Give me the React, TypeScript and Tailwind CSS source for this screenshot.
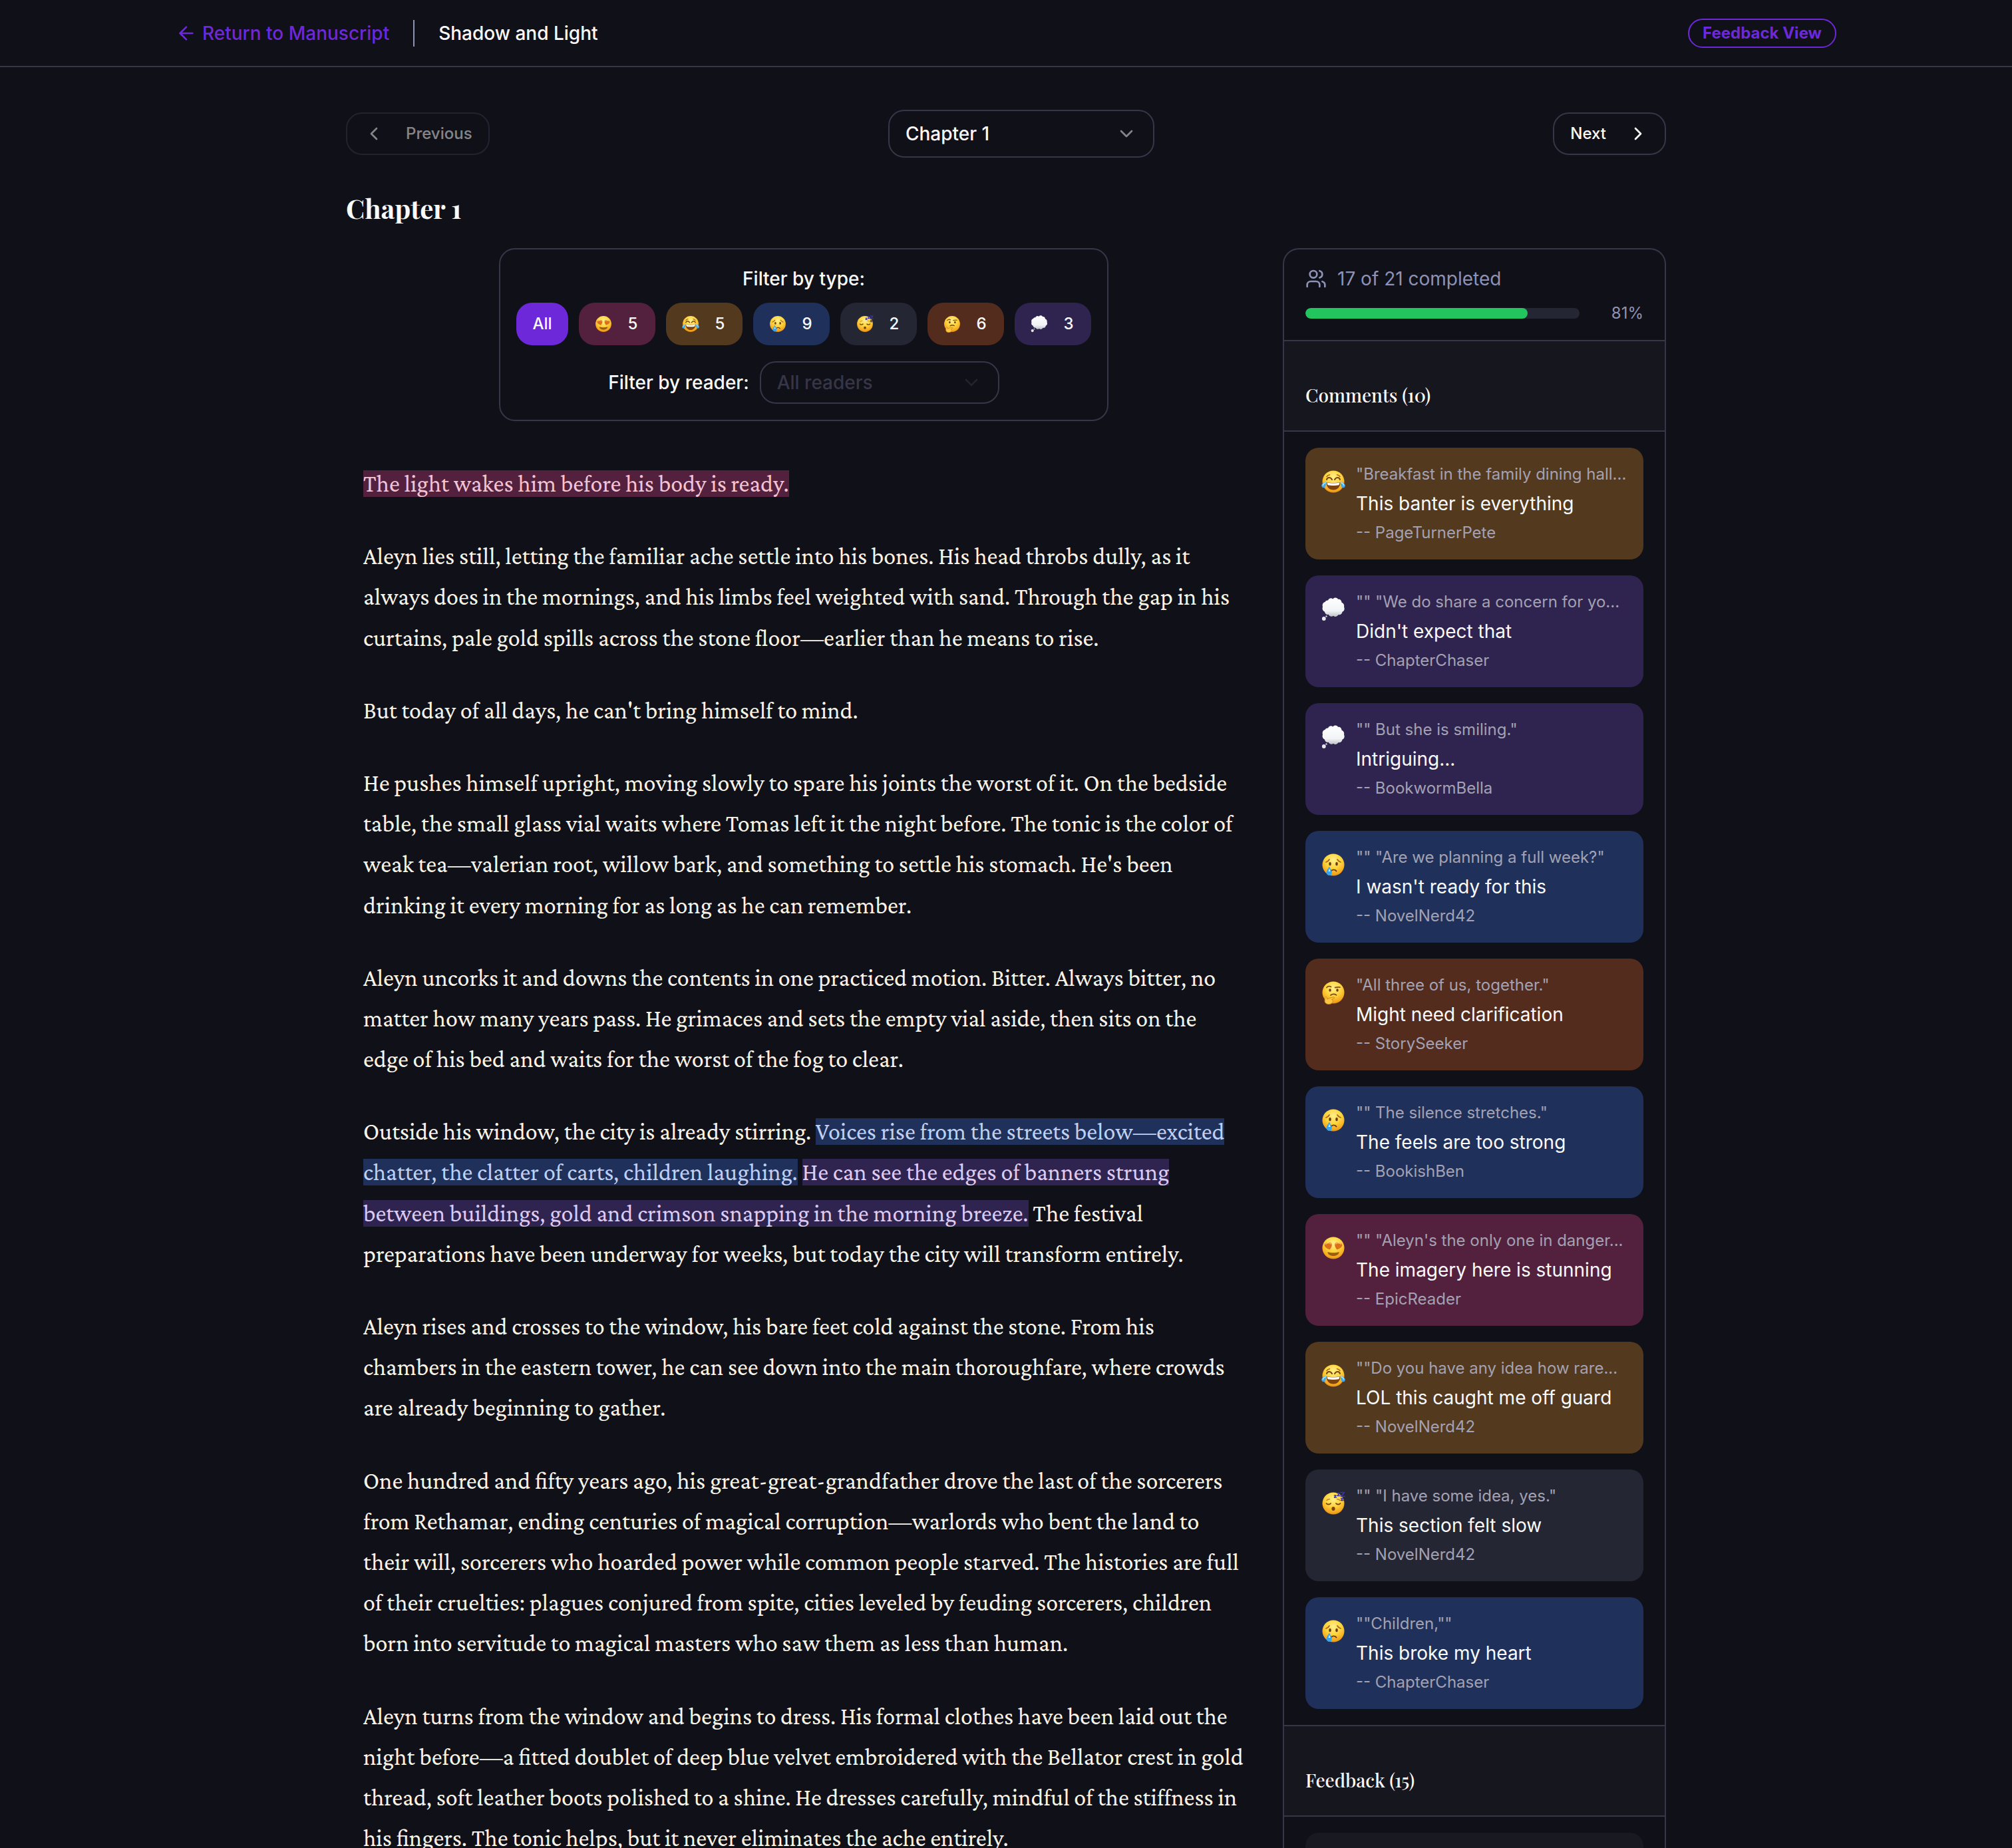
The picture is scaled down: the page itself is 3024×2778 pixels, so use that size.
import type { ReactNode } from "react";
import { ArrowLeft, ChevronDown, ChevronLeft, ChevronRight, Users } from "lucide-react";

type Reaction = "love" | "funny" | "sad" | "boring" | "confused" | "thought";

interface Comment {
  reaction: Reaction;
  quote: string;
  text: string;
  author: string;
}

const reactionBg: Record<Reaction, string> = {
  love: "bg-[#53213e]",
  funny: "bg-[#53391e]",
  sad: "bg-[#1f315b]",
  boring: "bg-[#252633]",
  confused: "bg-[#542c1d]",
  thought: "bg-[#2f234f]",
};

const reactionMark: Record<Reaction, string> = {
  love: "bg-[#53213e] text-[#f3c4d4]",
  funny: "bg-[#53391e] text-[#f3dcb4]",
  sad: "bg-[#1f315b] text-[#bfd0f3]",
  boring: "bg-[#252633] text-[#d4d4dc]",
  confused: "bg-[#542c1d] text-[#f3cdb8]",
  thought: "bg-[#2f234f] text-[#dccbf3]",
};

const filters: { reaction: Reaction; label: string; count: number }[] = [
  { reaction: "love", label: "Loved it", count: 5 },
  { reaction: "funny", label: "Funny", count: 5 },
  { reaction: "sad", label: "Sad", count: 9 },
  { reaction: "boring", label: "Slow", count: 2 },
  { reaction: "confused", label: "Confused", count: 6 },
  { reaction: "thought", label: "Thoughts", count: 3 },
];

const comments: Comment[] = [
  { reaction: "funny", quote: '"Breakfast in the family dining hall...', text: "This banter is everything", author: "PageTurnerPete" },
  { reaction: "thought", quote: '"" "We do share a concern for yo...', text: "Didn't expect that", author: "ChapterChaser" },
  { reaction: "thought", quote: '"" But she is smiling."', text: "Intriguing...", author: "BookwormBella" },
  { reaction: "sad", quote: '"" "Are we planning a full week?"', text: "I wasn't ready for this", author: "NovelNerd42" },
  { reaction: "confused", quote: '"All three of us, together."', text: "Might need clarification", author: "StorySeeker" },
  { reaction: "sad", quote: '"" The silence stretches."', text: "The feels are too strong", author: "BookishBen" },
  { reaction: "love", quote: '"" "Aleyn\'s the only one in danger...', text: "The imagery here is stunning", author: "EpicReader" },
  { reaction: "funny", quote: '""Do you have any idea how rare...', text: "LOL this caught me off guard", author: "NovelNerd42" },
  { reaction: "boring", quote: '"" "I have some idea, yes."', text: "This section felt slow", author: "NovelNerd42" },
  { reaction: "sad", quote: '""Children,""', text: "This broke my heart", author: "ChapterChaser" },
];

const completed = 17;
const readers = 21;
const percent = Math.round((completed / readers) * 100);

const Face = ({ children }: { children: ReactNode }) => (
  <>
    <defs>
      <radialGradient id="face" cx="0.5" cy="0.3" r="0.72">
        <stop offset="0" stopColor="#fff08a" />
        <stop offset="0.5" stopColor="#fdd33c" />
        <stop offset="0.85" stopColor="#f5a61d" />
        <stop offset="1" stopColor="#e08a12" />
      </radialGradient>
    </defs>
    <circle cx="18" cy="18" r="16.5" fill="url(#face)" />
    {children}
  </>
);

const Emoji = ({ reaction, className }: { reaction: Reaction; className: string }) => (
  <svg viewBox="0 0 36 36" className={className} aria-hidden="true">
    {reaction === "love" && (
      <Face>
        <path d="M12.500 20.500C8 19 4.500 16.500 4.800 13.300c.2-2.800 3.700-3.700 5.400-1.500 1.300-2.500 5-2.200 5.500.5.500 2.800-1 5.700-3.200 8.200z" fill="#dd6f18" />
        <path d="M23.500 20.500c4.500-1.500 8-4 7.700-7.200-.2-2.800-3.700-3.700-5.400-1.500-1.300-2.500-5-2.200-5.500.5-.5 2.800 1 5.700 3.200 8.200z" fill="#dd6f18" />
        <path d="M6.500 12.300c.5-.8 1.300-1 2-.8M12.500 11.500c.7-.4 1.400-.2 1.800.4M21.800 11.800c.5-.6 1.200-.8 1.900-.4M27.500 11.500c.8-.2 1.600.1 2 .8" fill="none" stroke="#f9b9a0" strokeWidth="1.200" strokeLinecap="round" />
        <path d="M9.500 24c5 1.800 12 1.800 17 0 .3 3.500-3.800 6-8.500 6s-8.800-2.500-8.500-6z" fill="#9a5c10" />
      </Face>
    )}
    {reaction === "funny" && (
      <Face>
        <path d="M8 15c1-4 6-4 8 0M20 15c2-4 7-4 8 0" fill="none" stroke="#7a4510" strokeWidth="2" strokeLinecap="round" />
        <path d="M8 10.500c1-1.500 2.500-2.500 4.500-2.700M28 10.500c-1-1.500-2.500-2.500-4.500-2.700" fill="none" stroke="#a8671a" strokeWidth="1.500" strokeLinecap="round" />
        <path d="M7.500 19c6 1.500 15 1.500 21 0 0 7-4.500 11.500-10.500 11.500S7.500 26 7.500 19z" fill="#7d4310" />
        <path d="M8.500 19.500c6 1.300 13 1.300 19 0-.3 2-.8 3.200-1.500 3.700-5 1-11 1-16 0-.7-.5-1.200-1.700-1.500-3.700z" fill="#fff" />
        <path d="M7.500 18C3 19 0 21.500.3 24.700c.3 3 4.500 3.300 5.700.6.900-2 1-4.500 1.500-7.300zM28.500 18c4.500 1 7.500 3.500 7.200 6.700-.3 3-4.500 3.300-5.700.6-.9-2-1-4.500-1.500-7.300z" fill="#3fa9f0" />
        <path d="M6.500 19.500c-2.500 1-4 2.500-4.200 4M29.500 19.500c2.500 1 4 2.500 4.200 4" fill="none" stroke="#b4e2fb" strokeWidth="1.500" strokeLinecap="round" />
      </Face>
    )}
    {reaction === "sad" && (
      <Face>
        <path d="M7 14c2-.8 4-2 5-4M29 14c-2-.8-4-2-5-4" fill="none" stroke="#a8671a" strokeWidth="1.800" strokeLinecap="round" />
        <ellipse cx="13" cy="16.500" rx="1.800" ry="2.700" fill="#6b3a0c" />
        <ellipse cx="23" cy="16.500" rx="1.800" ry="2.700" fill="#6b3a0c" />
        <path d="M14.500 27.500c1.500-2.800 6.500-2.800 8 0" fill="none" stroke="#6b3a0c" strokeWidth="1.900" strokeLinecap="round" />
        <path d="M12 20.500c-1.800 3.300-4.300 5.700-4.300 9 0 2.700 1.800 4.500 4.200 4.500s4-1.800 3.900-4.500c-.1-3.300-2.800-5.700-3.800-9z" fill="#35a5ee" />
        <path d="M12 23.500l-1.500 4.500h3z" fill="#e3f4fd" />
      </Face>
    )}
    {reaction === "boring" && (
      <Face>
        <path d="M7.500 18c1.500 2 5 2 6.500 0M22 18c1.500 2 5 2 6.500 0" fill="none" stroke="#7a4510" strokeWidth="1.800" strokeLinecap="round" />
        <path d="M8 13.500c1-1.300 2.500-2 4.500-2M28 13.500c-1-1.300-2.500-2-4.500-2" fill="none" stroke="#c5821f" strokeWidth="1.300" strokeLinecap="round" />
        <ellipse cx="18" cy="26" rx="2.600" ry="2.900" fill="#7d4310" />
        <path d="M29 1.500h5.500l-5 6h5.500M24 2.500h3.500l-3.500 4h4M19.500 6h2.500l-2.500 3h3M29.500 10.500h3l-3 3h3.500" fill="none" stroke="#3b35a8" strokeWidth="1.600" strokeLinejoin="round" strokeLinecap="round" />
      </Face>
    )}
    {reaction === "confused" && (
      <Face>
        <path d="M8 10.500c1.500-2 4.500-2.500 6.500-1M20.500 10.500c2.300-.2 5-1 7.500-.3" fill="none" stroke="#8a5214" strokeWidth="1.800" strokeLinecap="round" />
        <ellipse cx="13" cy="14.500" rx="1.700" ry="2.300" fill="#6b3a0c" />
        <ellipse cx="24" cy="14.500" rx="1.700" ry="2.300" fill="#6b3a0c" />
        <path d="M14 22c2.500-1.800 6-1.800 8.500-.3" fill="none" stroke="#7a4510" strokeWidth="1.800" strokeLinecap="round" />
        <path d="M5.500 25.500c.8-1.700 2.700-.9 2.800.9l.1 1.600c2.800-1.300 6-2.500 9.600-3.200 1.900-.3 2.200 1.700.6 2.300l-3.500 1.500c2 .3 3 1.500 2.200 2.900-.8 2.700-3.300 4-6.300 4-3.600 0-6-2-5.900-5.200 0-1.700.1-3.500.4-4.800z" fill="#fdc640" stroke="#d08a1a" strokeWidth="1" strokeLinejoin="round" />
      </Face>
    )}
    {reaction === "thought" && (
      <>
        <defs>
          <linearGradient id="cloud" x1="0" y1="0" x2="0" y2="1">
            <stop offset="0" stopColor="#ffffff" />
            <stop offset="0.7" stopColor="#f1f3f6" />
            <stop offset="1" stopColor="#bfc3c6" />
          </linearGradient>
        </defs>
        <path
          d="M10 6.500c1.500-3 5-3.500 7.300-1.800 2.200-2.500 6.200-2.200 7.700.3 3-.6 5.600 1.500 5.500 4.300 2.800.7 4.300 3.200 3.500 5.700 1.500 2.800.3 5.800-2.500 6.500-.5 3-3.300 4.500-6 3.800-1.500 2.700-5.200 3.200-7.500 1.400-2.500 1.600-6 .9-7.300-1.600-3 .5-5.500-1.300-5.800-3.900C2 20.500.8 17.500 2 15 .8 12 2.500 9 5.500 8.700 6.200 7 8 6.200 10 6.500z"
          fill="url(#cloud)"
          transform="translate(0 -3) scale(1 1.150)"
        />
        <circle cx="3.800" cy="32" r="2.900" fill="#e6e9eb" />
        <circle cx="7.500" cy="28.500" r="1.200" fill="#d5d9dc" />
      </>
    )}
  </svg>
);

const Mark = ({ reaction, children }: { reaction: Reaction; children: ReactNode }) => (
  <mark className={reactionMark[reaction]}>{children}</mark>
);

const CommentCard = ({ comment }: { comment: Comment }) => (
  <li className={`flex gap-4 rounded-[20px] p-6 ${reactionBg[comment.reaction]}`}>
    <div className="flex h-[54px] shrink-0 items-center">
      <Emoji reaction={comment.reaction} className="size-9" />
    </div>
    <div className="flex min-w-0 flex-col gap-2">
      <p className="whitespace-nowrap text-2xl leading-8 text-[#a3a1b2]">{comment.quote}</p>
      <p className="text-[28px] leading-10 text-[#fafafa]">{comment.text}</p>
      <p className="text-2xl leading-8 text-[#a3a1b2]">-- {comment.author}</p>
    </div>
  </li>
);

const SectionTitle = ({ children }: { children: ReactNode }) => (
  <h2 className="border-y-2 border-[#373548] bg-[#16161f] px-8 pt-15 pb-8 font-['Playfair_Display','Liberation_Serif',serif] text-[28px] leading-[42px] font-medium text-[#fafafa]">
    {children}
  </h2>
);

export default function App() {
  return (
    <div className="h-screen overflow-hidden bg-[#101018] font-[Inter,sans-serif] text-[#fafafa]">
      <header className="border-b-2 border-[#373548]">
        <div className="mx-auto flex h-[99px] max-w-[2560px] items-center justify-between px-8">
          <div className="flex items-center gap-9 text-[28px] font-medium">
            <a href="#manuscript" className="flex items-center gap-2 text-[#6d28d9]">
              <ArrowLeft className="size-8" />
              Return to Manuscript
            </a>
            <span className="h-10 w-[2px] bg-[#8e92b5]" />
            <h1>Shadow and Light</h1>
          </div>
          <span className="rounded-full border-2 border-[#6d28d9] px-5 text-2xl leading-10 font-bold text-[#6d28d9]">
            Feedback View
          </span>
        </div>
      </header>

      <main className="mx-auto max-w-[2048px] px-8 pt-16">
        <nav className="flex items-center justify-between">
          <button
            disabled
            className="flex h-16 items-center gap-8 rounded-3xl border-2 border-[#373548] px-6 text-2xl font-medium opacity-50"
          >
            <ChevronLeft className="size-8" />
            Previous
          </button>
          <div className="relative w-[400px]">
            <select
              aria-label="Chapter"
              className="h-[72px] w-full appearance-none rounded-3xl border-2 border-[#373548] bg-transparent px-6 text-[28px] font-medium"
            >
              <option>Chapter 1</option>
            </select>
            <ChevronDown className="pointer-events-none absolute top-5 right-[26px] size-8 opacity-50" />
          </div>
          <button className="flex h-16 items-center gap-8 rounded-3xl border-2 border-[#373548] px-6 text-2xl font-medium">
            Next
            <ChevronRight className="size-8" />
          </button>
        </nav>

        <h2 className="mt-12 mb-8 font-['Playfair_Display','Liberation_Serif',serif] text-[40px] leading-[56px] font-bold">
          Chapter 1
        </h2>

        <div className="flex items-start gap-8">
          <div className="flex min-w-0 flex-1 flex-col items-center">
            <section className="flex flex-col items-center rounded-3xl border-2 border-[#373548] p-6 text-[28px] font-medium">
              <h3 className="leading-10">Filter by type:</h3>
              <div className="mt-4 flex gap-4 text-2xl">
                <button className="h-16 rounded-3xl bg-[#6d28d9] px-6">All</button>
                {filters.map((filter) => (
                  <button
                    key={filter.reaction}
                    aria-label={filter.label}
                    className={`flex h-16 w-[115px] items-center gap-6 rounded-3xl px-6 ${reactionBg[filter.reaction]}`}
                  >
                    <Emoji reaction={filter.reaction} className="size-[26px] shrink-0" />
                    {filter.count}
                  </button>
                ))}
              </div>
              <div className="mt-6 flex items-center gap-4">
                <label htmlFor="reader">Filter by reader:</label>
                <div className="relative w-[360px]">
                  <select
                    id="reader"
                    className="h-16 w-full appearance-none rounded-3xl border-2 border-[#373548] bg-transparent px-6 font-medium text-[#373548]"
                  >
                    <option>All readers</option>
                  </select>
                  <ChevronDown className="pointer-events-none absolute top-4 right-[26px] size-8 text-[#373548] opacity-50" />
                </div>
              </div>
            </section>

            <article className="mt-16 w-full space-y-12 px-[26px] font-['Crimson_Pro','Liberation_Serif',serif] text-[36px] leading-[1.7] text-[#f8f4e8]">
              <p>
                <Mark reaction="love">The light wakes him before his body is ready.</Mark>
              </p>
              <p>
                Aleyn lies still, letting the familiar ache settle into his bones. His head throbs dully, as it always
                does in the mornings, and his limbs feel weighted with sand. Through the gap in his curtains, pale gold
                spills across the stone floor—earlier than he means to rise.
              </p>
              <p>But today of all days, he can't bring himself to mind.</p>
              <p>
                He pushes himself upright, moving slowly to spare his joints the worst of it. On the bedside table, the
                small glass vial waits where Tomas left it the night before. The tonic is the color of weak
                tea—valerian root, willow bark, and something to settle his stomach. He's been drinking it every morning
                for as long as he can remember.
              </p>
              <p>
                Aleyn uncorks it and downs the contents in one practiced motion. Bitter. Always bitter, no matter how
                many years pass. He grimaces and sets the empty vial aside, then sits on the edge of his bed and waits
                for the worst of the fog to clear.
              </p>
              <p>
                Outside his window, the city is already stirring.{" "}
                <Mark reaction="sad">
                  Voices rise from the streets below—excited chatter, the clatter of carts, children laughing.
                </Mark>{" "}
                <Mark reaction="thought">
                  He can see the edges of banners strung between buildings, gold and crimson snapping in the morning
                  breeze.
                </Mark>{" "}
                The festival preparations have been underway for weeks, but today the city will transform entirely.
              </p>
              <p>
                Aleyn rises and crosses to the window, his bare feet cold against the stone. From his chambers in the
                eastern tower, he can see down into the main thoroughfare, where crowds are already beginning to gather.
              </p>
              <p>
                One hundred and fifty years ago, his great-great-grandfather drove the last of the sorcerers from
                Rethamar, ending centuries of magical corruption—warlords who bent the land to their will, sorcerers who
                hoarded power while common people starved. The histories are full of their cruelties: plagues conjured
                from spite, cities leveled by feuding sorcerers, children born into servitude to magical masters who saw
                them as less than human.
              </p>
              <p>
                Aleyn turns from the window and begins to dress. His formal clothes have been laid out the night
                before—a fitted doublet of deep blue velvet embroidered with the Bellator crest in gold thread, soft
                leather boots polished to a shine. He dresses carefully, mindful of the stiffness in his fingers. The
                tonic helps, but it never eliminates the ache entirely.
              </p>
            </article>
          </div>

          <aside className="w-[576px] shrink-0 overflow-hidden rounded-t-3xl border-2 border-b-0 border-[#373548]">
            <div className="px-8 py-6 text-[#8e92b5]">
              <div className="flex items-center gap-4 text-[28px] leading-10">
                <Users className="size-8" />
                {completed} of {readers} completed
              </div>
              <div className="mt-4 flex h-8 items-center gap-6">
                <div className="h-4 flex-1 overflow-hidden rounded-full bg-[#252633]">
                  <div className="h-full rounded-full bg-[#22c55e]" style={{ width: `${percent}%` }} />
                </div>
                <span className="w-[72px] text-right text-2xl">{percent}%</span>
              </div>
            </div>
            <SectionTitle>Comments (10)</SectionTitle>
            <ul className="flex flex-col gap-6 px-8 py-6">
              {comments.map((comment) => (
                <CommentCard key={comment.text} comment={comment} />
              ))}
            </ul>
            <SectionTitle>Feedback (15)</SectionTitle>
            <div className="px-8 py-6">
              <div className="h-[168px] rounded-[20px] bg-[#191922]" />
            </div>
          </aside>
        </div>
      </main>
    </div>
  );
}
